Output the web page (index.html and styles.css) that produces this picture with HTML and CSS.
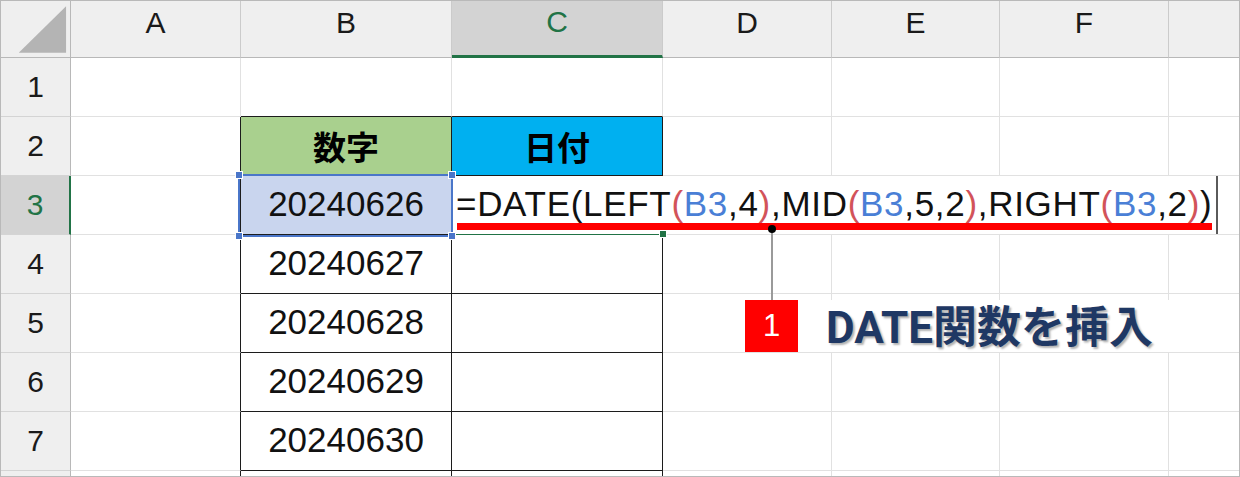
FILE: index.html
```html
<!DOCTYPE html>
<html lang="ja">
<head>
    <meta charset="UTF-8">
    <title>DATE関数</title>
    <link rel="stylesheet" href="styles.css">
</head>
<body>
    <div class="sheet">
        <div class="grid">
            <!-- column headers -->
            <div class="cell hd corner">
                <svg width="70" height="56" viewBox="0 0 70 56"><polygon points="66,5 66,52 18,52" fill="#b4b4b4"/></svg>
            </div>
            <div class="cell hd colhd">A</div>
            <div class="cell hd colhd">B</div>
            <div class="cell hd colhd on">C</div>
            <div class="cell hd colhd">D</div>
            <div class="cell hd colhd">E</div>
            <div class="cell hd colhd">F</div>
            <div class="cell hd colhd last"></div>

            <!-- row 1 -->
            <div class="cell hd rowhd">1</div>
            <div class="cell"></div>
            <div class="cell tt"></div>
            <div class="cell tt"></div>
            <div class="cell"></div>
            <div class="cell"></div>
            <div class="cell"></div>
            <div class="cell last"></div>

            <!-- row 2 -->
            <div class="cell hd rowhd">2</div>
            <div class="cell tl"></div>
            <div class="cell t head green">数字</div>
            <div class="cell t head blue">日付</div>
            <div class="cell"></div>
            <div class="cell"></div>
            <div class="cell"></div>
            <div class="cell last"></div>

            <!-- row 3 -->
            <div class="cell hd rowhd on">3</div>
            <div class="cell tl"></div>
            <div class="cell t picked">
                20240626
                <div class="sel-box">
                    <i class="knob k1"></i><i class="knob k2"></i><i class="knob k3"></i><i class="knob k4"></i>
                </div>
            </div>
            <div class="cell t active">
                <div class="edit">=DATE(LEFT<span class="p">(</span><span class="ref">B3</span>,4<span class="p">)</span>,MID<span class="p">(</span><span class="ref">B3</span>,5,2<span class="p">)</span>,RIGHT<span class="p">(</span><span class="ref">B3</span>,2<span class="p">)</span>)</div>
                <i class="fill-knob"></i>
            </div>
            <div class="cell"></div>
            <div class="cell"></div>
            <div class="cell"></div>
            <div class="cell last"></div>

            <!-- row 4 -->
            <div class="cell hd rowhd">4</div>
            <div class="cell tl"></div>
            <div class="cell t">20240627</div>
            <div class="cell t"></div>
            <div class="cell"></div>
            <div class="cell"></div>
            <div class="cell"></div>
            <div class="cell last"></div>

            <!-- row 5 -->
            <div class="cell hd rowhd">5</div>
            <div class="cell tl"></div>
            <div class="cell t">20240628</div>
            <div class="cell t"></div>
            <div class="cell"></div>
            <div class="cell"></div>
            <div class="cell"></div>
            <div class="cell last"></div>

            <!-- row 6 -->
            <div class="cell hd rowhd">6</div>
            <div class="cell tl"></div>
            <div class="cell t">20240629</div>
            <div class="cell t"></div>
            <div class="cell"></div>
            <div class="cell"></div>
            <div class="cell"></div>
            <div class="cell last"></div>

            <!-- row 7 -->
            <div class="cell hd rowhd">7</div>
            <div class="cell tl"></div>
            <div class="cell t">20240630</div>
            <div class="cell t"></div>
            <div class="cell"></div>
            <div class="cell"></div>
            <div class="cell"></div>
            <div class="cell last"></div>

            <!-- row 8 (only its top edge shows) -->
            <div class="cell hd rowhd"></div>
            <div class="cell tl"></div>
            <div class="cell t"></div>
            <div class="cell t"></div>
            <div class="cell"></div>
            <div class="cell"></div>
            <div class="cell"></div>
            <div class="cell last"></div>
        </div>

        <!-- annotation -->
        <div class="underline"></div>
        <div class="dot"></div>
        <div class="leader"></div>
        <div class="callout">
            <div class="badge">1</div>
            <div class="label">DATE関数を挿入</div>
        </div>
    </div>
</body>
</html>
```

FILE: styles.css
```css
* {
    box-sizing: border-box;
}

body {
    margin: 0;
    background: #fff;
    font-family: 'Liberation Sans', 'Noto Sans CJK JP', sans-serif;
}

.sheet {
    position: relative;
    width: 1240px;
    height: 477px;
    border: 1px solid #b9b9b9;
    overflow: hidden;
}

.grid {
    display: grid;
    grid-template-columns: 70px 170px 211px 211px 169px 168px 169px 1fr;
    grid-template-rows: 57px repeat(8, 59px);
}

.cell {
    display: flex;
    align-items: center;
    justify-content: center;
    padding-bottom: 3px;
    border-right: 1px solid #e1e1e1;
    border-bottom: 1px solid #e1e1e1;
    font-size: 35px;
    color: #111;
}

.cell.last {
    border-right: none;
}

/* headers */
.hd {
    background: #efefef;
    border-color: #cbcbcb;
    font-size: 30px;
    color: #1a1a1a;
}

.colhd {
    border-bottom-color: #b8b8b8;
    padding-bottom: 13px;
}

.rowhd {
    padding-bottom: 0;
    border-right-color: #b8b8b8;
    border-bottom-color: #d4d4d4;
}

.hd.on {
    background: #d3d3d3;
    color: #217346;
}

.colhd.on {
    border-bottom: 3px solid #217346;
}

.rowhd.on {
    border-right: 2px solid #217346;
}

.corner {
    padding: 0;
    border-bottom-color: #b8b8b8;
    border-right-color: #b8b8b8;
}

/* table borders */
.t {
    border-right-color: #1c1c1c;
    border-bottom-color: #1c1c1c;
}

.tl {
    border-right-color: #1c1c1c;
}

.tt {
    border-bottom-color: #1c1c1c;
}

.head {
    padding-bottom: 0;
    font-family: 'Noto Sans CJK JP', sans-serif;
    font-weight: bold;
    font-size: 33px;
    color: #000;
}

.green {
    background: #a9d08e;
}

.blue {
    background: #00b0f0;
}

/* selected B3 */
.picked {
    position: relative;
    background: #c9d5ee;
}

.sel-box {
    position: absolute;
    left: -3px;
    top: -2px;
    right: -2px;
    bottom: -3px;
    border: 2px solid #4a76c9;
    z-index: 3;
}

.knob {
    position: absolute;
    width: 6px;
    height: 6px;
    background: #4a76c9;
    outline: 1px solid #fff;
}

.k1 { left: -4px; top: -4px; }
.k2 { right: -4px; top: -4px; }
.k3 { left: -4px; bottom: -4px; }
.k4 { right: -4px; bottom: -4px; }

/* active C3 with formula being typed */
.active {
    position: relative;
    border-bottom: 2px solid #217346;
}

.edit {
    position: absolute;
    left: -1px;
    top: 0;
    width: 767px;
    height: 58px;
    z-index: 2;
    display: flex;
    align-items: center;
    padding: 0 0 3px 3px;
    background: #fff;
    border-left: 2px solid #217346;
    border-right: 2px solid #5a5a5a;
    font-size: 35px;
    letter-spacing: 0.7px;
    color: #111;
    white-space: nowrap;
}

.ref {
    color: #4a7fd6;
}

.p {
    color: #d2535a;
}

.fill-knob {
    position: absolute;
    right: -4px;
    bottom: -4px;
    width: 6px;
    height: 6px;
    background: #217346;
    outline: 1px solid #fff;
    z-index: 3;
}

/* annotation */
.underline {
    position: absolute;
    left: 456px;
    top: 222px;
    width: 755px;
    height: 7px;
    background: #ff0000;
    z-index: 4;
}

.dot {
    position: absolute;
    left: 767px;
    top: 224px;
    width: 8px;
    height: 8px;
    border-radius: 50%;
    background: #000;
    z-index: 6;
}

.leader {
    position: absolute;
    left: 770px;
    top: 228px;
    width: 2px;
    height: 72px;
    background: #9a9a9a;
    z-index: 5;
}

.callout {
    position: absolute;
    left: 744px;
    top: 299px;
    display: flex;
    gap: 16px;
    height: 52px;
    z-index: 5;
}

.badge {
    width: 53px;
    display: flex;
    align-items: center;
    justify-content: center;
    background: #ff0000;
    color: #fff;
    font-size: 31px;
}

.label {
    width: 382px;
    display: flex;
    align-items: center;
    padding: 0 0 5px 12px;
    background: #fff;
    font-family: 'Roboto', 'Noto Sans CJK JP', sans-serif;
    font-weight: bold;
    font-size: 44px;
    color: #1f3864;
    text-shadow: 2px 2px 2px rgba(0, 0, 0, 0.3);
}
```
